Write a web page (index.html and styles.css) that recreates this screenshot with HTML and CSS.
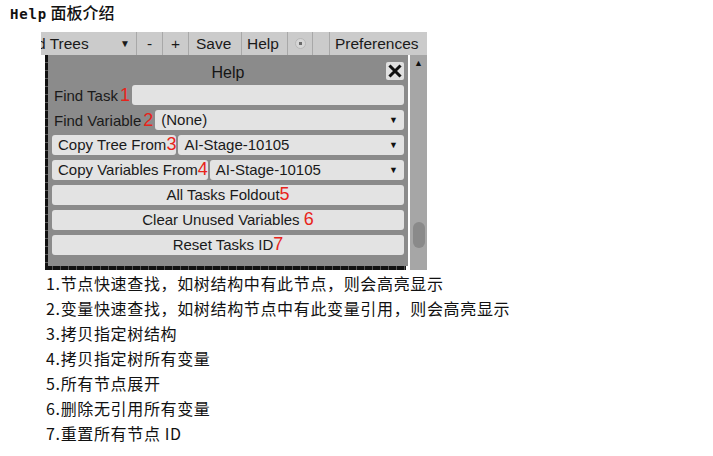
FILE: index.html
```html
<!DOCTYPE html>
<html>
<head>
<meta charset="utf-8">
<link rel="stylesheet" href="styles.css">
</head>
<body>
<div class="title"><span class="mono">Help</span> 面板介绍</div>
<div class="shot">
  <div class="toolbar">
    <div class="tb tb-trees"><span class="clip">d Trees</span><span class="arrow">▼</span></div>
    <div class="tb tb-minus">-</div>
    <div class="tb tb-plus">+</div>
    <div class="tb tb-save">Save</div>
    <div class="tb tb-help">Help</div>
    <div class="tb tb-dot"><span class="dot"></span></div>
    <div class="tb tb-blank"></div>
    <div class="tb tb-pref">Preferences</div>
  </div>
  <div class="main">
    <div class="left">
      <div class="inner">
        <div class="edge"></div>
        <div class="panel">
          <div class="head">
            <div class="head-title">Help</div>
            <div class="close">
              <svg width="14" height="14" viewBox="0 0 14 14"><path d="M2.5 2.5 L11.5 11.5 M11.5 2.5 L2.5 11.5" stroke="#111" stroke-width="3" stroke-linecap="square"/></svg>
            </div>
          </div>
          <div class="row">
            <span class="label">Find Task</span><span class="num">1</span>
            <div class="field grow"></div>
          </div>
          <div class="row">
            <span class="label">Find Variable</span><span class="num">2</span>
            <div class="field grow drop">(None)<span class="arrow">▼</span></div>
          </div>
          <div class="row">
            <div class="field btn btn-left">Copy Tree From<span class="num">3</span></div>
            <div class="field grow drop">AI-Stage-10105<span class="arrow">▼</span></div>
          </div>
          <div class="row">
            <div class="field btn btn-left">Copy Variables From<span class="num">4</span></div>
            <div class="field grow drop">AI-Stage-10105<span class="arrow">▼</span></div>
          </div>
          <div class="row">
            <div class="field btn grow center">All Tasks Foldout<span class="num">5</span></div>
          </div>
          <div class="row">
            <div class="field btn grow center">Clear Unused Variables <span class="num">6</span></div>
          </div>
          <div class="row">
            <div class="field btn grow center">Reset Tasks ID<span class="num">7</span></div>
          </div>
        </div>
      </div>
      <div class="bottom"></div>
    </div>
    <div class="scroll">
      <div class="up">▲</div>
      <div class="thumb"></div>
    </div>
  </div>
</div>
<ol class="notes">
  <li>1.节点快速查找，如树结构中有此节点，则会高亮显示</li>
  <li>2.变量快速查找，如树结构节点中有此变量引用，则会高亮显示</li>
  <li>3.拷贝指定树结构</li>
  <li>4.拷贝指定树所有变量</li>
  <li>5.所有节点展开</li>
  <li>6.删除无引用所有变量</li>
  <li>7.重置所有节点 ID</li>
</ol>
</body>
</html>
```
FILE: styles.css
```css
html, body { margin: 0; padding: 0; background: #fff; }
body { font-family: "Noto Sans CJK SC", "Noto Sans", sans-serif; color: #111; }

.title {
  padding: 3px 0 0 10px;
  height: 20px;
  font-size: 16px;
  line-height: 18px;
  font-weight: 500;
}
.title .mono { font-family: "DejaVu Sans Mono", monospace; font-size: 14px; font-weight: bold; letter-spacing: 0.8px; }

.shot {
  margin: 9px 0 0 41px;
  width: 386px;
  font-family: "Liberation Sans", Arial, sans-serif;
  color: #1a1a1a;
}

.toolbar {
  display: flex;
  height: 23px;
  background: #cbcbcb;
  font-size: 15.5px;
  line-height: 23px;
  overflow: hidden;
}
.tb { border-right: 1px solid #a8a8a8; white-space: nowrap; box-sizing: border-box; flex: none; }
.tb-trees { width: 96px; display: flex; justify-content: space-between; overflow: hidden; }
.tb-trees .clip { margin-left: -4px; }
.tb-trees .arrow { font-size: 10px; margin-right: 6px; }
.tb-minus { width: 26px; text-align: center; }
.tb-plus { width: 26px; text-align: center; }
.tb-save { width: 53px; padding-left: 7px; }
.tb-help { width: 46px; padding-left: 5px; }
.tb-dot { width: 25px; display: flex; align-items: center; justify-content: center; }
.dot { width: 9px; height: 9px; border-radius: 50%; border: 1px solid #b8b8b8; background: radial-gradient(circle, #6a6a6a 0 1.5px, #d6d6d6 2px); }
.tb-blank { width: 17px; }
.tb-pref { width: 97px; padding-left: 5px; border-right: 0; }

.main { display: flex; height: 215px; }
.left { flex: 1; display: flex; flex-direction: column; }
.inner { flex: 1; display: flex; }
.edge {
  width: 3px;
  margin-left: 4px;
  background: repeating-linear-gradient(to bottom, #111 0 7px, #555 7px 8px);
}
.panel {
  flex: 1;
  background: #8b8b8b;
  padding: 0 4px;
  display: flex;
  flex-direction: column;
  gap: 5px;
}
.head { position: relative; height: 18px; display: flex; align-items: center; justify-content: center; margin-top: 7px; }
.head-title { font-size: 16px; color: #151515; padding-top: 3px; }
.close {
  position: absolute; right: 0; top: 0;
  width: 18px; height: 18px;
  background: #e0e0e0; border-radius: 2px;
  display: flex; align-items: center; justify-content: center;
}
.row { display: flex; align-items: center; height: 20px; gap: 2px; }
.label { font-size: 15px; color: #1a1a1a; padding-left: 2px; }
.num { color: #e8231b; font-size: 18px; line-height: 18px; font-family: "Liberation Sans", sans-serif; }
.field {
  height: 20px;
  background: #e3e3e3;
  border-radius: 3px;
  font-size: 15px;
  line-height: 20px;
  padding: 0 6px;
  box-sizing: border-box;
  white-space: nowrap;
}
.grow { flex: 1; }
.drop { display: flex; justify-content: space-between; }
.drop .arrow { font-size: 9px; color: #111; }
.btn { padding: 0 5px; }
.btn-left { padding: 0 0 0 6px; }
.center { text-align: center; }

.scroll {
  width: 17px;
  margin-left: 2px;
  background: #a6a6a6;
  display: flex;
  flex-direction: column;
  align-items: center;
}
.up { font-size: 9px; color: #111; margin-top: 3px; line-height: 10px; }
.thumb { margin-top: auto; margin-bottom: 22px; width: 12px; height: 26px; background: #8a8a8a; border-radius: 6px; }

.bottom {
  height: 4px;
  margin-left: 4px;
  margin-right: 2px;
  background: repeating-linear-gradient(to right, #111 0 7px, #555 7px 8px);
}

.notes {
  list-style: none;
  margin: 1px 0 0 46px;
  padding: 0;
  font-size: 16px;
  letter-spacing: 0.65px;
  line-height: 25px;
  color: #111;
}
```
